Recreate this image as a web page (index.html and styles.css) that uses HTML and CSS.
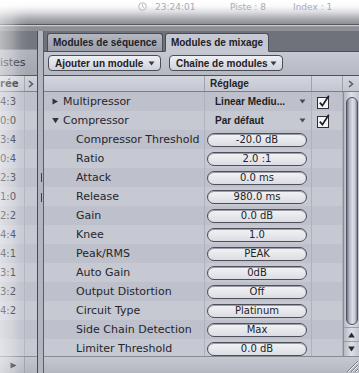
FILE: index.html
```html
<!DOCTYPE html>
<html lang="fr">
<head>
<meta charset="utf-8">
<title>Modules de mixage</title>
<link rel="stylesheet" href="styles.css">
</head>
<body>
<div class="app">
  <header class="titlebar">
    <svg class="clock" width="9" height="9" viewBox="0 0 9 9"><circle cx="4.5" cy="4.5" r="3.8" fill="none" stroke="#b4b6bc" stroke-width="1"/><path d="M4.5 2.2V4.6L6 5.6" fill="none" stroke="#b4b6bc" stroke-width="0.9"/></svg>
    <span class="t-time">23:24:01</span>
    <span class="t-piste">Piste : 8</span>
    <span class="t-index">Index : 1</span>
  </header>
  <div class="titlerule"></div>
  <div class="workspace">
    <aside class="tracks">
      <div class="tracks-top"></div>
      <div class="tracks-title"><span>istes</span></div>
      <div class="tracks-head">
        <div class="th-name"><span>rée</span></div>
        <div class="th-more"><svg width="6" height="8" viewBox="0 0 6 8"><path d="M1 1L4.5 4L1 7" fill="none" stroke="#5a5c64" stroke-width="1.6"/></svg></div>
      </div>
      <div class="tracks-rows">
        <div class="trow"><span class="tc">4:3</span><span class="tc2"></span></div>
        <div class="trow"><span class="tc">0:0</span><span class="tc2"></span></div>
        <div class="trow"><span class="tc">3:4</span><span class="tc2"></span></div>
        <div class="trow"><span class="tc">0:4</span><span class="tc2"></span></div>
        <div class="trow"><span class="tc">2:3</span><span class="tc2"></span></div>
        <div class="trow"><span class="tc">1:0</span><span class="tc2"></span></div>
        <div class="trow"><span class="tc">2:2</span><span class="tc2"></span></div>
        <div class="trow"><span class="tc">4:4</span><span class="tc2"></span></div>
        <div class="trow"><span class="tc">4:1</span><span class="tc2"></span></div>
        <div class="trow"><span class="tc">3:1</span><span class="tc2"></span></div>
        <div class="trow"><span class="tc">3:2</span><span class="tc2"></span></div>
        <div class="trow"><span class="tc">4:2</span><span class="tc2"></span></div>
        <div class="trow"><span class="tc"></span><span class="tc2"></span></div>
        <div class="trow"><span class="tc"></span><span class="tc2"></span></div>
      </div>
      <div class="tracks-foot">
        <div class="tf-play"><svg width="7" height="7" viewBox="0 0 7 7"><path d="M0.5 0.5L6.5 3.5L0.5 6.5Z" fill="#2c2d33"/></svg></div>
        <div class="tf-rest"></div>
      </div>
    </aside>

    <div class="splitter"><i class="grip"></i><i class="grip"></i></div>

    <section class="mixer">
      <nav class="tabs">
        <div class="tab">Modules de séquence</div>
        <div class="tab active">Modules de mixage</div>
      </nav>
      <div class="toolbar">
        <button class="popup add">Ajouter un module <svg class="caret" width="7" height="5" viewBox="0 0 7 5"><path d="M0.5 0.5H6.5L3.5 4.5Z" fill="#3a3b42"/></svg></button>
        <button class="popup chain">Chaîne de modules <svg class="caret" width="7" height="5" viewBox="0 0 7 5"><path d="M0.5 0.5H6.5L3.5 4.5Z" fill="#3a3b42"/></svg></button>
      </div>
      <div class="grid-head">
        <div class="gh gh-name"></div>
        <div class="gh gh-set">Réglage</div>
        <div class="gh gh-chk"></div>
        <div class="gh gh-more"><svg width="6" height="8" viewBox="0 0 6 8"><path d="M1 1L4.5 4L1 7" fill="none" stroke="#5a5c64" stroke-width="1.6"/></svg></div>
      </div>
      <div class="grid-body">
        <div class="rows">
          <div class="row">
            <div class="c-name lvl0"><svg class="tri" width="7" height="7" viewBox="0 0 7 7"><path d="M0.5 0.5L6 3.5L0.5 6.5Z" fill="#33343a"/></svg>Multipressor</div>
            <div class="c-set"><div class="menu">Linear Mediu... <svg class="caret" width="7" height="5" viewBox="0 0 7 5"><path d="M0.5 0.5H6.5L3.5 4.5Z" fill="#4a4b52"/></svg></div></div>
            <div class="c-chk"><svg class="check" width="14" height="14" viewBox="0 0 14 14"><rect x="0.5" y="2.5" width="11" height="11" fill="#f4f4f6" stroke="#2e2f35"/><path d="M2.8 7.6L5.4 10.6L11.8 0.8" fill="none" stroke="#1d1e22" stroke-width="1.7"/></svg></div>
          </div>
          <div class="row">
            <div class="c-name lvl0"><svg class="tri" width="7" height="7" viewBox="0 0 7 7"><path d="M0.2 1L6.8 1L3.5 6.2Z" fill="#33343a"/></svg>Compressor</div>
            <div class="c-set"><div class="menu">Par défaut <svg class="caret" width="7" height="5" viewBox="0 0 7 5"><path d="M0.5 0.5H6.5L3.5 4.5Z" fill="#4a4b52"/></svg></div></div>
            <div class="c-chk"><svg class="check" width="14" height="14" viewBox="0 0 14 14"><rect x="0.5" y="2.5" width="11" height="11" fill="#f4f4f6" stroke="#2e2f35"/><path d="M2.8 7.6L5.4 10.6L11.8 0.8" fill="none" stroke="#1d1e22" stroke-width="1.7"/></svg></div>
          </div>
          <div class="row"><div class="c-name lvl1">Compressor Threshold</div><div class="c-set"><div class="field">-20.0 dB</div></div><div class="c-chk"></div></div>
          <div class="row"><div class="c-name lvl1">Ratio</div><div class="c-set"><div class="field">2.0 :1</div></div><div class="c-chk"></div></div>
          <div class="row"><div class="c-name lvl1">Attack</div><div class="c-set"><div class="field">0.0 ms</div></div><div class="c-chk"></div></div>
          <div class="row"><div class="c-name lvl1">Release</div><div class="c-set"><div class="field">980.0 ms</div></div><div class="c-chk"></div></div>
          <div class="row"><div class="c-name lvl1">Gain</div><div class="c-set"><div class="field">0.0 dB</div></div><div class="c-chk"></div></div>
          <div class="row"><div class="c-name lvl1">Knee</div><div class="c-set"><div class="field">1.0</div></div><div class="c-chk"></div></div>
          <div class="row"><div class="c-name lvl1">Peak/RMS</div><div class="c-set"><div class="field">PEAK</div></div><div class="c-chk"></div></div>
          <div class="row"><div class="c-name lvl1">Auto Gain</div><div class="c-set"><div class="field">0dB</div></div><div class="c-chk"></div></div>
          <div class="row"><div class="c-name lvl1">Output Distortion</div><div class="c-set"><div class="field">Off</div></div><div class="c-chk"></div></div>
          <div class="row"><div class="c-name lvl1">Circuit Type</div><div class="c-set"><div class="field">Platinum</div></div><div class="c-chk"></div></div>
          <div class="row"><div class="c-name lvl1">Side Chain Detection</div><div class="c-set"><div class="field">Max</div></div><div class="c-chk"></div></div>
          <div class="row"><div class="c-name lvl1">Limiter Threshold</div><div class="c-set"><div class="field">0.0 dB</div></div><div class="c-chk"></div></div>
        </div>
        <div class="vscroll">
          <div class="thumb"></div>
          <div class="arrow up"><svg width="7" height="6" viewBox="0 0 7 6"><path d="M3.5 0.5L6.8 5.5H0.2Z" fill="#2a2b30"/></svg></div>
          <div class="arrow down"><svg width="7" height="6" viewBox="0 0 7 6"><path d="M0.2 0.5H6.8L3.5 5.5Z" fill="#2a2b30"/></svg></div>
        </div>
      </div>
      <div class="statusbar">
        <div class="sb-fill"></div>
        <div class="sb-grip"><svg width="15" height="16" viewBox="0 0 15 16"><path d="M3 15L14 4M7 15L14 8M11 15L14 12" stroke="#7e8089" stroke-width="1"/><path d="M4 15L14 5M8 15L14 9M12 15L14 13" stroke="#eceef2" stroke-width="1"/></svg></div>
      </div>
    </section>
  </div>
  <div class="vignette"></div>
</div>
</body>
</html>
```

FILE: styles.css
```css
* { box-sizing: border-box; }
html, body { margin: 0; padding: 0; }
body { background: #8e9096; }

.app {
  position: relative;
  width: 359px;
  height: 373px;
  overflow: hidden;
  font-family: "DejaVu Sans", "Noto Sans", sans-serif;
  color: #24252b;
}

/* ---------- title bar ---------- */
.titlebar {
  height: 24px;
  display: flex;
  align-items: flex-start;
  padding: 2px 0 0 138px;
  background: linear-gradient(#ffffff 0%, #fbfbfc 25%, #dcdde0 50%, #a6a8ae 80%, #8c8e95 100%);
  font-size: 9px;
  line-height: 10px;
  color: #a9abb1;
}
.clock { margin-top: 0; flex: none; }
.t-time { margin-left: 8px; width: 75px; }
.t-piste { width: 63px; }

.titlerule {
  height: 7px;
  background: linear-gradient(#55575e 0 1px, #c9cbd0 1px 2px, #9a9ca3 2px 3px, #8d8f96 3px);
}

.workspace {
  display: flex;
  height: 342px;
}

/* ---------- left tracks panel ---------- */
.tracks {
  width: 37px;
  flex: none;
  display: flex;
  flex-direction: column;
  overflow: hidden;
}
.tracks-top {
  height: 18px;
  background: #75777f;
}
.tracks-title {
  height: 27px;
  border-top: 1px solid #8c8e97;
  border-bottom: 1px solid #55575f;
  background: linear-gradient(#b0b2bc, #a3a5af);
  display: flex;
  align-items: center;
  padding-left: 0;
  font-size: 11px;
  white-space: nowrap;
  color: #26272c;
}
.tracks-head {
  height: 16px;
  display: flex;
  background: linear-gradient(#d2d4dc, #c3c5cf);
  border-bottom: 1px solid #81838d;
}
.th-name {
  width: 25px;
  display: flex;
  align-items: center;
  padding-left: 0;
  white-space: nowrap;
  font-family: "DejaVu Sans", sans-serif;
  font-weight: bold;
  font-size: 10px;
  border-right: 1px solid #a2a4ae;
}
.th-more {
  flex: 1;
  display: flex;
  align-items: center;
  padding-left: 3px;
}
.tracks-rows {
  height: 264px;
  display: flex;
  flex-direction: column;
}
.trow {
  height: 19px;
  flex: none;
  display: flex;
  background: #bec0cb;
}
.trow:nth-child(even) { background: #c6c8d2; }
.tc {
  width: 25px;
  font-size: 10px;
  line-height: 19px;
  color: #1f2025;
  border-right: 1px solid #b1b3bd;
  white-space: nowrap;
}
.tc2 { flex: 1; }
.tracks-foot {
  height: 17px;
  display: flex;
  border-top: 1px solid #8a8c95;
  background: linear-gradient(#c4c6cf, #b3b5bf);
}
.tf-play {
  width: 25px;
  display: flex;
  align-items: center;
  padding-left: 10px;
  border-right: 1px solid #9c9ea8;
}
.tf-rest { flex: 1; }

/* ---------- splitter ---------- */
.splitter {
  width: 7px;
  flex: none;
  background: #b4b6bf;
  border-left: 1px solid #4a4c54;
  border-right: 1px solid #5c5e66;
  display: flex;
  flex-direction: column;
  align-items: flex-end;
  padding-top: 142px;
}
.grip {
  display: block;
  width: 1px;
  height: 9px;
  margin-right: 1px;
  margin-bottom: 11px;
  background: #3c3d44;
}

/* ---------- mixer ---------- */
.mixer {
  flex: 1;
  display: flex;
  flex-direction: column;
  min-width: 0;
}
.tabs {
  height: 21px;
  display: flex;
  align-items: flex-end;
  gap: 2px;
  padding-left: 3px;
  background: #6f717b;
  border-bottom: 1px solid #4d4f58;
}
.tab {
  height: 19px;
  margin-bottom: -1px;
  padding: 0 5px;
  border: 1px solid #4b4d56;
  border-bottom: 1px solid #4d4f58;
  border-radius: 3px 3px 0 0;
  background: linear-gradient(#b4b6c0, #9c9ea9);
  font-family: "Liberation Sans", Arial, sans-serif;
  font-weight: bold;
  font-size: 10px;
  line-height: 17px;
  color: #202126;
  white-space: nowrap;
}
.tab.active {
  background: #c5c7d1;
  border-bottom-color: #c5c7d1;
}
.toolbar {
  height: 24px;
  display: flex;
  align-items: flex-start;
  gap: 8px;
  padding: 3px 0 0 4px;
  background: linear-gradient(#c5c7d1, #b6b8c3);
  border-bottom: 1px solid #4f5159;
}
.popup {
  height: 16px;
  margin: 0;
  display: flex;
  align-items: center;
  justify-content: space-between;
  padding: 0 5px 0 6px;
  border: 1px solid #4b4d56;
  border-radius: 4px;
  background: linear-gradient(#eef0f4, #d0d2da);
  font-family: "Liberation Sans", Arial, sans-serif;
  font-weight: bold;
  font-size: 10px;
  color: #1f2025;
  white-space: nowrap;
}
.popup.add { width: 113px; }
.popup.chain { width: 114px; }

.grid-head {
  height: 16px;
  display: grid;
  grid-template-columns: 161px 107px 31px 16px;
  background: linear-gradient(#d4d6de, #c4c6d0);
  border-bottom: 1px solid #7b7d87;
}
.gh {
  border-right: 1px solid #9fa1ab;
  display: flex;
  align-items: center;
}
.gh-set {
  padding-left: 5px;
  font-family: "Liberation Sans", Arial, sans-serif;
  font-weight: bold;
  font-size: 10px;
  color: #222328;
}
.gh-more { border-right: none; justify-content: center; }

.grid-body {
  height: 264px;
  display: flex;
  overflow: hidden;
}
.rows {
  width: 299px;
  flex: none;
  display: flex;
  flex-direction: column;
}
.row {
  height: 19px;
  flex: none;
  display: grid;
  grid-template-columns: 161px 107px 31px;
  background: #bec0cb;
}
.row:nth-child(even) { background: #c6c8d2; }
.c-name, .c-set, .c-chk {
  display: flex;
  align-items: center;
  border-right: 1px solid #afb1bb;
  white-space: nowrap;
  overflow: hidden;
}
.c-name { font-size: 11px; color: #25262b; }
.lvl0 { padding-left: 8px; }
.lvl0 .tri { margin-right: 4px; flex: none; }
.lvl1 { padding-left: 32px; }
.c-set { padding-left: 2px; }
.menu {
  width: 101px;
  display: flex;
  align-items: center;
  justify-content: space-between;
  padding: 0 2px 0 8px;
  font-family: "Liberation Sans", Arial, sans-serif;
  font-weight: bold;
  font-size: 10px;
  color: #1e1f24;
}
.field {
  width: 100px;
  height: 14px;
  border: 1px solid #4e5059;
  border-radius: 7px;
  background: linear-gradient(#f2f3f6, #dcdde3);
  box-shadow: inset 0 1px 0 #9c9ea6;
  text-align: center;
  font-size: 10px;
  line-height: 12px;
  color: #222328;
}
.c-chk { padding-left: 5px; align-items: flex-start; padding-top: 3px; }
.check { display: block; }

/* ---------- scrollbar ---------- */
.vscroll {
  width: 16px;
  flex: none;
  display: flex;
  flex-direction: column;
  align-items: center;
  background: linear-gradient(to right, #b7b9c3, #dfe0e6 50%, #c3c5cf);
  border-left: 1px solid #8a8c96;
}
.thumb {
  width: 12px;
  height: 228px;
  margin-top: 5px;
  margin-bottom: 2px;
  border: 1px solid #4f5261;
  border-radius: 6px;
  background: linear-gradient(to right, #6f7386, #b3b7c6 25%, #dcdee6 55%, #c6c9d5 80%, #7d8193);
}
.arrow {
  width: 15px;
  height: 14px;
  display: flex;
  align-items: center;
  justify-content: center;
  border-top: 1px solid #9a9ca6;
}

/* ---------- status bar ---------- */
.statusbar {
  height: 17px;
  display: flex;
  border-top: 1px solid #878993;
  background: linear-gradient(#c6c8d1, #b4b6c0);
}
.sb-fill { flex: 1; }
.sb-grip {
  width: 16px;
  display: flex;
  align-items: flex-end;
  justify-content: flex-end;
}

/* soft white fade on the screenshot's left edge */
.vignette {
  position: absolute;
  left: 0;
  top: 0;
  width: 28px;
  height: 100%;
  pointer-events: none;
  background: linear-gradient(to right, rgba(255,255,255,0.5), rgba(255,255,255,0.3) 12px, rgba(255,255,255,0.1) 20px, rgba(255,255,255,0) 28px);
}
```
